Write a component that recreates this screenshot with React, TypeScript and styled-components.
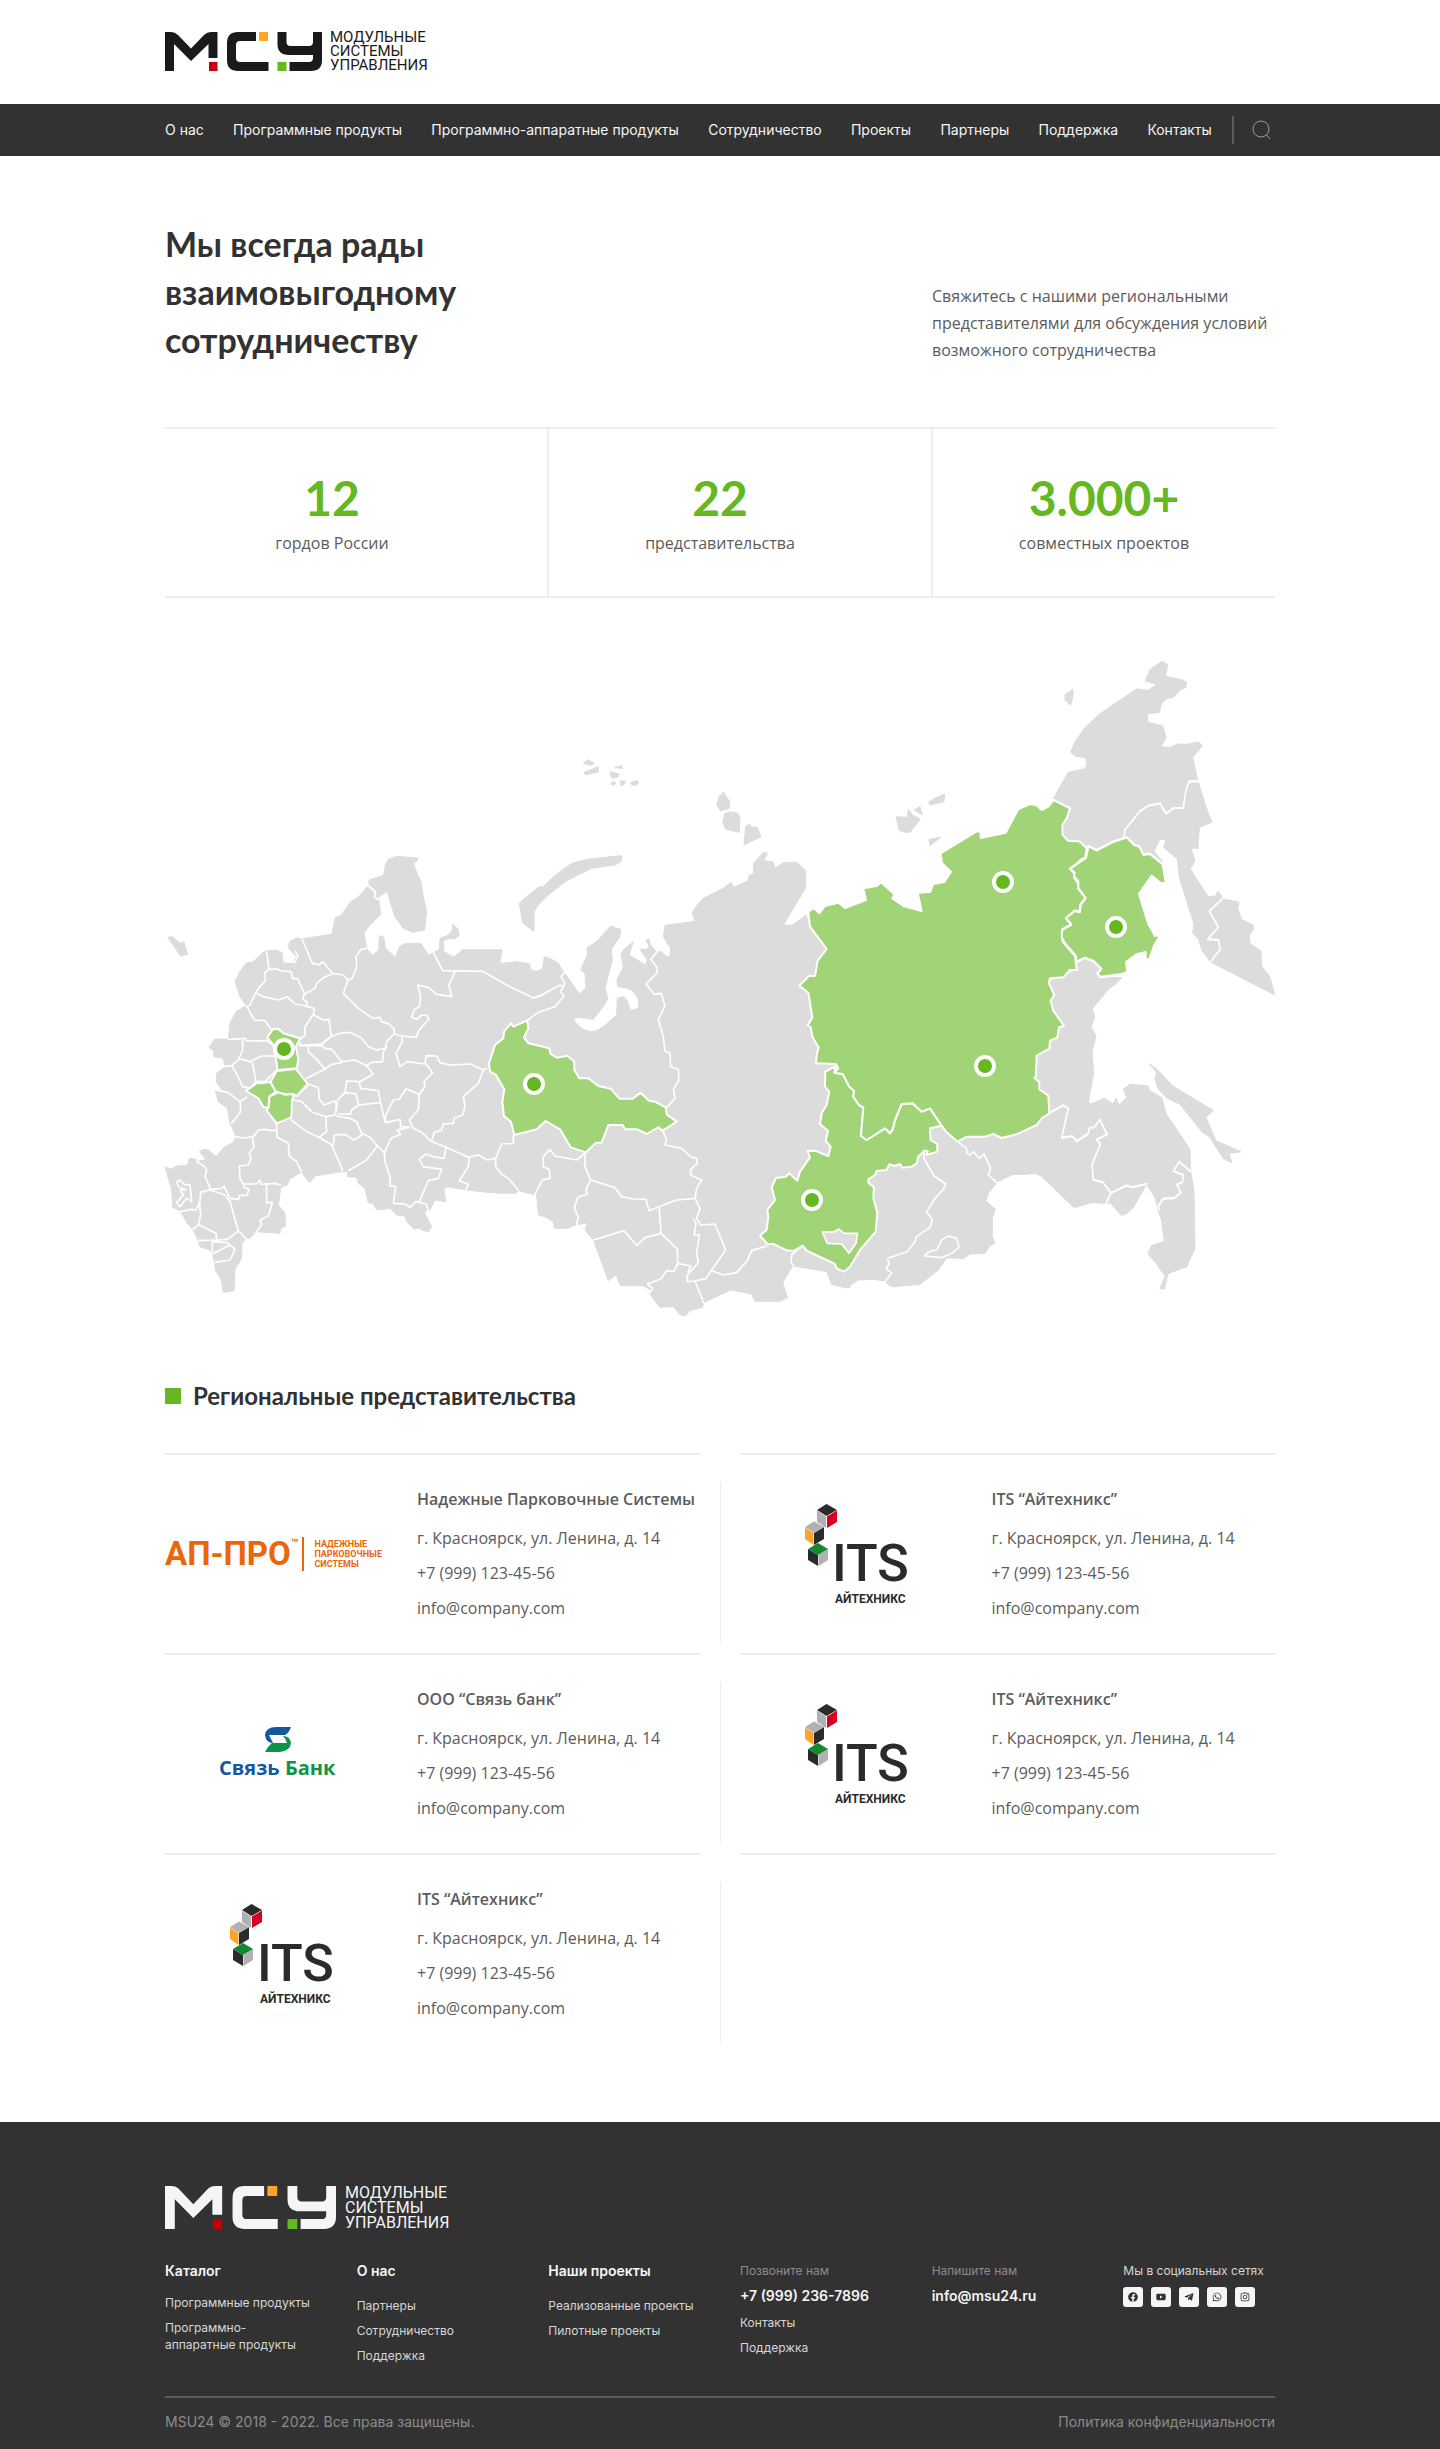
import React from 'react';
import styled, { createGlobalStyle } from 'styled-components';
import { FaFacebook, FaYoutube, FaTelegramPlane, FaWhatsapp, FaInstagram } from 'react-icons/fa';

const color = {
  dark: '#323232',
  text: '#5c5c5c',
  green: '#65b81f',
  region: '#a0d476',
  land: '#dcdcdc',
  line: '#eeeeee',
};

const GlobalStyle = createGlobalStyle`
  *, *::before, *::after { box-sizing: border-box; }
  body {
    margin: 0;
    background: #fff;
    color: ${color.text};
    font-family: 'Open Sans', 'Noto Sans', sans-serif;
    font-size: 16px;
    line-height: 27px;
  }
  h1, h2, h3, p, ul, dl, dd { margin: 0; padding: 0; }
  ul { list-style: none; }
  a { color: inherit; text-decoration: none; }
`;

const Container = styled.div`
  max-width: 1150px;
  margin: 0 auto;
  padding: 0 20px;
`;

/* ---------- Logo ---------- */

const LogoLink = styled.a<{ $large?: boolean }>`
  display: flex;
  align-items: center;
  gap: ${(p) => (p.$large ? 9 : 8)}px;
  width: fit-content;
  color: ${(p) => (p.$large ? '#f5f5f5' : '#1a1a1a')};
`;

const LogoMark = styled.svg<{ $large?: boolean }>`
  display: block;
  width: ${(p) => (p.$large ? 171 : 157)}px;
  height: ${(p) => (p.$large ? 43 : 39)}px;
`;

const LogoText = styled.span<{ $large?: boolean }>`
  display: flex;
  flex-direction: column;
  font-family: Roboto, sans-serif;
  font-size: ${(p) => (p.$large ? 16 : 15)}px;
  line-height: ${(p) => (p.$large ? 15 : 14)}px;
`;

function Logo({ large }: { large?: boolean }) {
  return (
    <LogoLink href="#" $large={large} aria-label="МСУ">
      <LogoMark $large={large} viewBox="0 0 157 39" preserveAspectRatio="none" aria-hidden="true">
        <g fill="currentColor">
          <path d="M0 39V0H6Q10 0 13 3L26 16.5L39 3Q42 0 46 0H52.5V26H43.5V12L26 29L9 12V39Z" />
          <path d="M91 0H73Q62 0 62 11V28Q62 39 73 39H103.5V30H75Q71 30 71 26V13Q71 9 75 9H91Z" />
          <path d="M112.5 0H121.5V10Q121.5 14 125.5 14H144Q148 14 148 10V0H157V28Q157 39 146 39H124.5V30H144Q148 30 148 26V23H124Q112.5 23 112.5 12Z" />
        </g>
        <rect x="44" y="30" width="8.5" height="9" fill="#c4000a" />
        <rect x="94" y="0" width="9" height="9" fill="#ffa724" />
        <rect x="112.5" y="30" width="9" height="9" fill={color.green} />
      </LogoMark>
      <LogoText $large={large}>
        <span>МОДУЛЬНЫЕ</span>
        <span>СИСТЕМЫ</span>
        <span>УПРАВЛЕНИЯ</span>
      </LogoText>
    </LogoLink>
  );
}

/* ---------- Header ---------- */

const TopBar = styled(Container)`
  padding-top: 30px;
  padding-bottom: 32px;
`;

const NavBar = styled.nav`
  background: ${color.dark};
`;

const NavInner = styled(Container)`
  display: flex;
  align-items: center;
  height: 52px;
`;

const NavList = styled.ul`
  display: flex;
  flex: 1;
  justify-content: space-between;
  margin-right: 20px;
  font-family: Inter, sans-serif;
  font-size: 14px;
  line-height: 20px;
  white-space: nowrap;
  color: #f5f5f5;
`;

const SearchButton = styled.button`
  display: flex;
  align-items: center;
  height: 28px;
  padding: 0 3px 0 18px;
  border: 0;
  border-left: 2px solid #5c5c5c;
  background: none;
  color: #9a9a9a;
  cursor: pointer;
`;

const navItems = [
  'О нас',
  'Программные продукты',
  'Программно-аппаратные продукты',
  'Сотрудничество',
  'Проекты',
  'Партнеры',
  'Поддержка',
  'Контакты',
];

function Header() {
  return (
    <header>
      <TopBar>
        <Logo />
      </TopBar>
      <NavBar>
        <NavInner>
          <NavList>
            {navItems.map((item) => (
              <li key={item}>
                <a href="#">{item}</a>
              </li>
            ))}
          </NavList>
          <SearchButton type="button" aria-label="Поиск">
            <svg width="20" height="20" viewBox="0 0 20 20" fill="none" stroke="currentColor">
              <circle cx="9" cy="9" r="8" />
              <path d="M14.5 15L18 19" />
            </svg>
          </SearchButton>
        </NavInner>
      </NavBar>
    </header>
  );
}

/* ---------- Intro and figures ---------- */

const Intro = styled.section`
  display: grid;
  grid-template-columns: 767fr 343fr;
  align-items: end;
  padding: 64px 0 63px;
`;

const Title = styled.h1`
  max-width: 400px;
  font-family: Lato, sans-serif;
  font-size: 34px;
  font-weight: 700;
  line-height: 48px;
  color: ${color.dark};
`;

const Figures = styled.dl`
  display: grid;
  grid-template-columns: 382fr 384fr 344fr;
  border: solid ${color.line};
  border-width: 2px 0;
`;

const Figure = styled.div`
  display: flex;
  flex-direction: column-reverse;
  align-items: center;
  gap: 4px;
  padding: 41px 0 39px;

  &:first-child { padding-right: 48px; }
  &:nth-child(2) { padding-right: 40px; }
  & + & { border-left: 2px solid ${color.line}; }
`;

const FigureValue = styled.dd`
  font-family: Lato, sans-serif;
  font-size: 48px;
  font-weight: 700;
  line-height: 56px;
  color: ${color.green};
`;

const figures = [
  { value: '12', label: 'гордов России' },
  { value: '22', label: 'представительства' },
  { value: '3.000+', label: 'совместных проектов' },
];

/* ---------- Map ---------- */

const MapSvg = styled.svg`
  display: block;
  width: 100%;
  height: auto;
  margin-top: 57px;

  .land { fill: ${color.land}; stroke: ${color.land}; stroke-width: 3; stroke-linejoin: round; }
  .border { fill: none; stroke: #fff; stroke-width: 5; stroke-linejoin: round; stroke-linecap: round; }
  .active { fill: ${color.region}; stroke: #fff; stroke-width: 6; stroke-linejoin: round; }
  .lake { fill: ${color.land}; stroke: #fff; stroke-width: 5; stroke-linejoin: round; }
`;

/* The sheets of the map, each with its own origin, drawn at three units to a pixel. */
const sheets = {
  west: 'translate(150 900) scale(0.33333)',
  north: 'translate(320 750) scale(0.33333)',
  centre: 'translate(450 820) scale(0.33333)',
  yakutia: 'translate(740 780) scale(0.33333)',
  east: 'translate(980 640) scale(0.33333 0.43367)',
};
type Sheet = keyof typeof sheets;
type Shapes = Partial<Record<Sheet, string[]>>;

const land: Shapes = {
  west: [
    '510 108 546 102 556 53 575 45 600 7 627 -10 652 -40 670 -26 674 -8 687 2 692 44 660 75 642 98 650 145 655 152 668 166 686 150 688 110 695 106 702 115 706 145 736 172 750 138 770 130 812 130 822 145 835 165 852 157 868 148 870 115 895 105 907 90 908 72 925 88 928 105 918 115 885 118 880 128 882 155 912 172 938 150 1056 150 1000 500 1200 800 1200 955 1168 945 1160 885 1150 883 1105 870 1098 878 1050 880 950 870 888 860 882 870 888 905 855 900 840 930 822 935 845 980 835 995 822 992 805 984 792 988 770 965 765 948 740 945 720 925 680 930 670 912 655 908 645 865 625 850 620 832 592 830 592 815 570 816 495 828 480 848 470 838 455 815 418 838 412 855 392 862 385 915 404 938 407 978 392 985 390 1000 320 995 300 1015 288 1018 276 1030 275 1075 255 1108 252 1172 220 1178 214 1140 196 1110 194 1090 190 1072 184 1052 150 1040 144 1020 128 988 112 970 90 932 68 922 65 870 45 800 62 808 80 798 113 795 118 775 138 778 142 785 168 778 148 755 160 748 175 750 198 770 222 742 248 728 258 710 250 690 240 670 232 625 205 605 196 575 215 570 198 545 200 520 225 500 220 475 192 470 190 450 177 443 195 417 235 418 240 370 258 335 280 322 290 318 270 290 255 245 270 215 288 190 310 185 340 157 352 152 380 150 400 160 403 185 430 185 440 170 425 155 416 145 418 125 440 114 456 117',
    '53 112 68 110 90 130 102 125 113 163 92 168',
  ],
  north: [
    '147 390 185 378 192 372 196 345 205 328 230 319 292 324 292 332 281 338 285 355 303 395 310 440 320 485 314 540 280 547 250 535 225 500 210 455 202 424 170 445 163 435 168 424 147 405',
    '598 460 610 448 658 410 670 410 700 380 755 340 800 328 890 318 906 318 903 335 885 345 815 355 740 392 685 435 655 465 642 485 642 545 608 518',
    '790 40 803 29 823 40 812 46',
    '792 67 835 50 835 66 797 74',
    '884 53 905 47 908 55',
    '870 65 897 72 893 82 875 84',
    '876 96 884 95 887 101 880 106 874 104',
    '902 92 915 93 916 99 908 107 900 104',
    '932 97 950 91 957 98 946 107 934 104',
    '1210 126 1229 155 1228 175 1202 183 1190 165 1196 143',
    '1215 190 1232 186 1250 188 1260 200 1258 247 1217 238 1208 215',
    '1277 230 1287 222 1297 232 1312 232 1323 260 1272 285',
  ],
  centre: [
    '38 390 155 390 134 410 155 430 175 428 200 425 240 432 240 448 260 454 278 445 283 410 300 415 325 430 340 455 352 470 388 522 408 505 405 460 392 450 412 405 411 385 445 360 482 318 512 328 510 350 484 388 487 420 465 505 474 535 460 560 430 598 385 592 370 595 380 612 400 628 420 635 440 632 460 620 500 585 502 535 520 530 532 542 542 572 566 565 564 535 545 510 525 503 503 500 501 480 520 442 513 400 525 385 550 365 537 405 585 434 592 420 570 388 590 388 598 380 588 360 598 358 600 372 620 397 635 395 650 410 661 408 662 385 640 350 645 316 735 304 727 278 745 250 760 235 820 205 842 187 852 202 895 182 896 168 912 160 910 132 940 97 953 100 940 122 970 126 975 145 1002 127 1040 127 1067 152 1067 203 1000 316 1028 315 1068 285 1080 320 1130 387 1200 500 1200 1403 1185 1403 1145 1392 1130 1355 1028 1338 998 1388 1013 1433 990 1444 915 1444 905 1422 842 1410 760 1448 758 1462 720 1472 705 1488 690 1484 670 1460 630 1462 598 1420 605 1412 580 1397 512 1397 498 1365 475 1382 430 1260 405 1230 412 1208 378 1215 350 1225 313 1225 310 1205 280 1188 265 1185 260 1123 250 1123 205 1112 195 1120 120 1117 50 1110 0 1100 0 408 12 412',
  ],
  yakutia: [
    '262 1475 275 1513 320 1523 355 1500 400 1498 435 1503 445 1515 460 1520 540 1513 595 1470 620 1433 670 1436 690 1422 735 1420 750 1397 765 1390 757 1370 757 1315 766 1288 738 1262 745 1240 770 1208 810 1185 700 1040 600 1000 500 1100 380 1200 350 1400 250 1440',
    '468 110 502 112 505 88 518 105 541 118 510 157 493 157 477 150',
    '522 90 540 80 547 105',
    '565 68 580 57 614 42 612 65 572 75',
    '567 178 602 172 570 197',
  ],
  east: [
    '290 742 315 733 340 740 365 760 358 777 425 779 400 797 385 805 337 850 344 870 333 893 348 913 336 950 341 998 325 1066 335 1070 372 1057 400 1070 408 1057 418 1073 441 1055 430 1036 450 1025 503 1028 510 1040 545 1055 560 1095 600 1140 630 1175 632 1225 642 1270 645 1402 620 1445 565 1460 553 1497 540 1495 555 1467 530 1438 504 1415 514 1397 553 1387 545 1340 536 1318 525 1285 500 1254 460 1308 440 1322 425 1327 392 1298 378 1299 335 1297 283 1309 183 1235 165 1230 130 1232 98 1232 48 1250 -20 1200 -80 1150 0 1100 140 900 205 790 288 762',
    '220 366 265 305 312 298 320 290 318 272 285 267 272 258 285 235 312 205 360 170 470 113 505 117 530 102 496 94 510 68 547 49 563 58 557 84 605 92 620 98 618 108 600 115 578 133 562 134 545 145 538 167 502 170 504 190 548 198 558 225 542 246 567 248 595 240 620 241 655 236 667 244 638 270 653 323 680 390 695 420 658 432 654 480 633 480 645 510 630 528 685 593 708 590 712 580 724 588 727 597 777 605 773 618 785 645 820 658 820 668 808 680 810 700 843 718 845 752 870 778 884 818 692 742 665 715 656 690 638 675 642 655 598 548 592 505 551 478 559 459 540 459 522 487 548 512 510 495 490 495 440 455 350 485 320 475 300 463 262 460 248 445 248 428 270 388',
    '255 127 279 114 279 130 272 150 255 137',
    '508 978 530 990 580 1030 700 1085 677 1100 708 1155 782 1180 747 1183 755 1205 730 1195 688 1145 665 1133 600 1070 560 1055 535 1035 525 1012 530 997',
  ],
};

const borders: Shapes = {
  west: [
    '456 117 487 190 508 194 519 185 547 220 580 225 594 240 607 235 620 200 618 170 633 148 650 145',
    '400 158 403 185 435 187 444 168 436 155',
    '547 222 525 230 500 250 495 265 463 283 458 297 470 305 472 318',
    '594 240 580 280 625 325 668 355 690 352 695 365 718 372 733 388 732 402 710 425 706 445 680 450 655 440 635 415 600 397 570 400 540 412 515 432',
    '850 157 878 212 998 214 1070 255 1150 294 1180 285',
    '915 214 897 255 905 290 860 283 835 262 803 255 812 290 808 320 793 328 785 352 800 358 815 345 830 346 837 357 805 393 800 412 755 408 735 402',
    '350 157 357 208 380 207 395 213 423 215 428 236 443 236 465 285',
    '357 208 345 217 346 242 320 272 300 315 290 320',
    '320 280 340 290 385 300 412 290 435 312 455 315 492 325 492 340 465 380 465 405 450 418',
    '292 322 313 360 345 362 362 387',
    '492 345 520 360 537 358 542 395 545 408 515 432 455 437 448 425',
    '235 418 285 415 290 423 350 422 370 435',
    '278 422 278 450 267 475 300 485 335 468 372 468',
    '267 478 245 497 220 500',
    '245 497 262 525 278 560 300 565 318 545 308 490',
    '318 545 345 545 378 513',
    '200 570 235 578 270 605 272 635 245 670',
    '270 605 290 592',
    '380 670 380 690 365 692 345 688 325 690 310 710 285 714 258 710',
    '308 715 312 742 297 760 303 775 295 795 268 798 270 835 280 852 320 852 330 840 333 853 375 850 392 855',
    '380 690 382 712 415 730 418 768 440 785 455 815',
    '424 660 470 695 507 712 545 735 578 812',
    '430 600 455 605 487 637 527 650 530 695 507 712',
    '440 588 478 553 505 563 508 598 522 615 555 603 560 620 555 645 527 650',
    '448 437 475 437 475 455 500 478 525 507 470 535',
    '475 437 515 437 525 445 545 448 575 485 615 480 650 497 670 522 630 545 590 543 585 578 563 600 558 635',
    '525 507 545 493 575 488',
    '650 497 665 487 698 485 700 455 710 440',
    '755 408 757 425 738 460 750 500 772 485 825 492 828 467 860 468 870 488 900 495 960 492 1000 510',
    '828 492 848 518 822 545 825 560 808 583 768 567 748 597 730 600 705 650 708 668 750 658 752 680 778 682',
    '808 583 805 630 778 660 790 685 815 697 840 722 888 742 955 772 985 765 1012 780 1037 775',
    '628 545 632 565 685 572 692 610 705 665',
    '585 578 618 582 626 615 605 630 602 642 565 642',
    '626 615 690 608',
    '560 648 600 655 620 665 635 700 660 712 680 735 703 758',
    '550 735 553 705 585 703 612 720 635 705',
    '680 740 650 780 595 812',
    '778 682 742 690 752 703 723 715 703 758 705 785 720 830 720 858 737 860 730 910 765 912 780 922 798 905 828 912 835 932',
    '1010 505 1000 510 985 550 940 590 945 620 938 645 912 655 910 670 880 672 875 690 853 697 845 722',
    '888 742 882 775 850 770 828 762 808 778 820 800 875 808 865 835 835 842 808 905',
    '957 772 955 800 928 842 955 853 948 870',
    '1090 705 1090 730 1055 732 1037 775 1037 800 1055 822 1075 835 1105 870',
    '140 785 165 800 170 810 165 830 180 862 178 870 152 877 150 905 138 930 125 928 92 935',
    '178 868 215 865 222 858 240 895 265 898 268 887 292 885 297 868 282 862 282 852',
    '180 870 225 885 240 905 265 993 232 1018 200 1020 145 1022',
    '148 905 152 945 145 975 130 987',
    '148 975 198 1000 200 1020',
    '265 993 290 1018',
    '350 855 350 908 367 908 355 948 330 960 335 975 318 997',
    '187 1055 187 1025 232 1028 255 1048 240 1080 195 1087',
    '187 1062 240 1035',
    '80 845 90 840 103 853 120 855 125 905 110 895 90 920 80 908 100 885 90 870 108 870 85 860 80 845',
  ],
  north: ['145 407 166 424 164 440 172 448'],
  centre: [
    '342 460 333 470 345 490 332 515 342 528 315 560 265 577 232 601',
    '250 534 275 525 330 495 340 500',
    '620 397 603 418 622 445 620 460 588 492 612 523 633 520 645 557 625 600 640 650 645 693 660 700 662 740 685 748 687 780 670 808 675 835 648 865',
    '638 932 650 960 645 975 695 985 725 1012 740 1015 742 1030 722 1048 722 1065 755 1080 740 1105 735 1135 680 1140 597 1172 588 1138 550 1137 515 1130 495 1103 422 1080 405 1040 405 1005',
    '408 997 380 1020 315 1008 300 988 280 1010 280 1040 298 1048 300 1075 277 1080 255 1123',
    '422 1080 408 1108 412 1122 383 1132 373 1165 385 1190 380 1215',
    '430 1260 522 1232 560 1276 585 1253 633 1240 628 1165',
    '633 1240 682 1287 683 1330 672 1355 650 1352 632 1377 592 1392 608 1405 600 1418',
    '735 1135 750 1165 740 1195 752 1215 795 1212 827 1290 785 1350 768 1375 735 1383 712 1385 712 1365 745 1328 740 1300 748 1245 732 1245 738 1210 732 1198',
    '683 1330 722 1338 715 1355',
    '735 1383 758 1440 760 1448',
    '950 1278 905 1292 890 1325 860 1358 820 1365 785 1352',
  ],
  yakutia: [
    '553 1112 552 1135 582 1188 617 1212 610 1228 585 1255 560 1295 577 1320 570 1342 530 1370 525 1385 500 1416 443 1435 447 1452 438 1467 455 1478 437 1503',
    '555 1425 575 1412 590 1410 605 1380 625 1368 650 1375 657 1402 635 1420 605 1433 555 1428',
    '653 1085 680 1105 680 1118 690 1125 700 1115 718 1135 732 1122 752 1165 745 1185 770 1208',
    '188 1397 155 1425 153 1445 160 1458',
  ],
  east: [
    '432 453 434 438 480 395 505 382 540 377 558 400 580 388 610 387 617 350 627 326 655 326',
    '727 597 688 625 715 662 683 690 715 692 721 713 692 742',
    '205 1092 250 1073 265 1080 245 1148 277 1144 291 1156 325 1138 328 1125 342 1124 360 1106 381 1140 350 1152 361 1163 336 1210 340 1245 368 1250 393 1275 378 1299',
    '393 1275 440 1258 457 1262 500 1254',
    '538 1313 535 1305 550 1288 583 1287 603 1274 590 1256 608 1250 609 1233 580 1225 598 1203 632 1226',
  ],
};

const activeRegions: Shapes = {
  west: [
    '352 412 368 388 385 386 400 400 450 415 438 440 445 478 440 505 382 510 380 490 375 465 370 435',
    '362 545 380 513 438 507 473 552 440 588 428 582 405 583 375 575',
    '288 573 322 548 330 550 360 546 378 575 358 590 355 625 340 620 325 595',
    '358 590 385 577 405 584 428 582 430 595 426 600 424 652 380 670 350 632 357 620',
  ],
  centre: [
    '232 601 190 620 183 610 162 635 160 655 135 675 117 730 120 755 138 765 163 808 157 845 162 888 183 905 193 945 260 928 287 903 330 928 362 982 408 997 438 968 455 968 475 915 518 915 525 928 562 928 590 942 625 922 638 932 680 905 650 883 647 862 615 845 597 842 572 818 548 836 508 836 482 806 445 798 415 775 388 775 373 750 373 725 352 707 320 713 302 702 298 685 235 670 222 652 235 625',
  ],
  yakutia: [
    '288 858 283 878 308 882 328 920 342 932 340 950 357 975 370 982 363 1068 380 1080 435 1045 450 1060 458 1048 465 1020 485 972 518 970 545 995 570 985 605 1037 570 1045 572 1080 592 1092 592 1115 560 1125 563 1113 553 1112 535 1130 530 1150 515 1160 487 1163 480 1152 465 1158 448 1153 440 1170 410 1173 405 1185 385 1198 385 1208 402 1222 400 1255 412 1298 407 1355 360 1410 330 1460 312 1475 290 1465 285 1452 260 1440 200 1412 188 1397 160 1413 140 1411 100 1392 82 1392 60 1366 80 1350 85 1310 82 1290 105 1260 95 1222 108 1194 138 1190 148 1180 172 1202 180 1175 210 1132 203 1113 225 1112 265 1128 272 1100 257 1083 264 1052 240 1032 245 1000 260 975 268 935 255 920 256 875',
    '205 395 222 384 238 400 255 378 295 368 315 384 378 360 370 325 410 318 423 307 463 343 457 355 490 378 545 393 533 338 570 336 580 312 613 306 633 275 606 250 602 220 710 154 722 156 722 174 797 158 835 87 870 72 890 76 905 90 925 80 941 60 990 85 980 115 967 135 968 165 985 183 1018 184 1040 205 1035 235 1025 237 992 268 1003 280 1003 295 1015 310 1015 327 1037 353 1020 375 1020 393 1005 393 978 415 995 435 967 450 968 485 1005 528 1010 570 990 570 970 592 930 595 926 608 943 645 932 662 940 692 972 738 957 742 952 773 930 782 928 806 890 827 888 890 883 893 898 907 898 928 925 947 928 1000 905 1015 890 1035 830 1063 785 1074 760 1062 735 1070 680 1070 653 1085 618 1055 605 1037 570 985 545 995 518 970 485 972 465 1020 458 1048 450 1060 435 1045 380 1080 363 1068 370 982 357 975 340 950 342 932 328 920 308 882 283 878 295 865 288 852 228 850 230 825 236 803 218 772 212 742 203 735 217 713 205 638 178 617 207 588 225 588 233 542 260 507 210 440',
  ],
  east: [
    '325 475 350 485 400 465 440 455 462 472 478 476 490 495 510 493 548 517 558 562 540 560 515 544 477 586 505 655 525 682 542 679 522 705 508 737 497 737 497 720 470 725 438 743 442 765 425 771 362 777 352 770 364 758 340 740 315 733 290 742 287 728 255 700 245 685 246 668 274 656 258 641 285 624 300 627 302 610 317 595 295 572 295 557 282 545 284 537 270 527 318 502 323 485',
  ],
};

const pins = [
  [284, 1049],
  [534, 1084],
  [1003, 882],
  [985, 1066],
  [812, 1200],
  [1116, 927],
];

function Layer({ shapes, kind }: { shapes: Shapes; kind: 'land' | 'border' | 'active' }) {
  return (
    <>
      {(Object.keys(shapes) as Sheet[]).map((sheet) => (
        <g key={sheet} transform={sheets[sheet]}>
          {shapes[sheet]!.map((points) =>
            kind === 'border' ? (
              <polyline key={points} className={kind} points={points} />
            ) : (
              <polygon key={points} className={kind} points={points} />
            ),
          )}
        </g>
      ))}
    </>
  );
}

function RegionMap() {
  return (
    <MapSvg viewBox="165 655 1110 665" role="img" aria-label="Карта представительств">
      <Layer shapes={land} kind="land" />
      <Layer shapes={borders} kind="border" />
      <Layer shapes={activeRegions} kind="active" />
      <g transform={sheets.yakutia}>
        <polygon className="lake" points="247 1356 282 1356 296 1347 312 1360 352 1360 348 1390 327 1420 305 1392 262 1390" />
      </g>
      {pins.map(([x, y]) => (
        <circle key={`${x}-${y}`} cx={x} cy={y} r="9" fill={color.green} stroke="#fff" strokeWidth="4" />
      ))}
    </MapSvg>
  );
}

/* ---------- Partner logos ---------- */

const ApProLogo = styled.div`
  display: flex;
  align-items: center;
  width: 216px;
  font-family: Roboto, sans-serif;
  font-weight: 700;
  color: #ea6608;
  white-space: nowrap;
`;

const ApProName = styled.span`
  font-size: 33px;
  line-height: 34px;
`;

const ApProSign = styled.span`
  align-self: flex-start;
  font-size: 12px;
  line-height: 12px;
`;

const ApProTagline = styled.span`
  display: flex;
  flex-direction: column;
  margin-left: 4px;
  padding: 2px 0 2px 10px;
  border-left: 2px solid currentColor;
  font-size: 9px;
  line-height: 10px;
`;

const PartnerSvg = styled.svg`
  display: block;
  overflow: visible;
`;

function ApPro() {
  return (
    <ApProLogo>
      <ApProName>АП-ПРО</ApProName>
      <ApProSign>™</ApProSign>
      <ApProTagline>
        <span>НАДЕЖНЫЕ</span>
        <span>ПАРКОВОЧНЫЕ</span>
        <span>СИСТЕМЫ</span>
      </ApProTagline>
    </ApProLogo>
  );
}

function Its() {
  return (
    <PartnerSvg width="114" height="100" viewBox="-14 0 114 100" role="img" aria-label="ITS Айтехникс">
      <path fill="#2b2b2d" d="M21.5 0L32 6L21.5 12L12 6ZM19 23V35L9 41V29ZM3 45V56L13 62V51Z" />
      <path fill="#b1b1b5" d="M12 6.500L21 12.500V24L12 18ZM9 17.500L19 23L9 29L0 23ZM23 45V56L13.500 62V51Z" />
      <path fill="#d9001f" d="M32 6.500V18L22 24V12.500Z" />
      <path fill="#ffa42a" d="M0 23.500L8.500 29V41L0 35Z" />
      <path fill="#12892f" d="M13 39L23 45L13 51L3 45Z" />
      <g fill="#2b2b2d" fontFamily="Roboto, sans-serif">
        <text x="27" y="77" fontSize="52" fontWeight="500">
          ITS
        </text>
        <text x="30" y="99" fontSize="12" fontWeight="700">
          АЙТЕХНИКС
        </text>
      </g>
    </PartnerSvg>
  );
}

function SvyazBank() {
  return (
    <PartnerSvg width="130" height="54" viewBox="-11 0 130 54" role="img" aria-label="СвязьБанк">
      <path fill="#1458a0" d="M72 0H57Q47 0 46 8Q47 16 54 16Q52 12 50 8H66Q70 6 72 0Z" />
      <path fill="#0c9448" d="M46 25H61Q71 24 72 16Q71 9 64 9Q67 12 68 16H53Q49 19 46 25Z" />
      <g fontFamily="'Open Sans', sans-serif" fontWeight="700" fontSize="20">
        <text x="0" y="48" fill="#1458a0">Связь</text>
        <text x="66" y="48" fill="#0c9448">Банк</text>
      </g>
    </PartnerSvg>
  );
}

/* ---------- Offices ---------- */

const SectionTitle = styled.h2`
  display: flex;
  align-items: center;
  gap: 12px;
  margin: 60px 0 41px;
  font-family: Lato, sans-serif;
  font-size: 24px;
  font-weight: 700;
  line-height: 32px;
  color: ${color.dark};

  &::before {
    content: '';
    width: 16px;
    height: 16px;
    background: ${color.green};
  }
`;

const OfficeRow = styled.div`
  display: grid;
  grid-template-columns: 1fr 1px 1fr;
  column-gap: 19px;
  min-height: 200px;
`;

const RowDivider = styled.span`
  margin: 29px 0 11px;
  background: ${color.line};
`;

const OfficeCard = styled.article`
  display: grid;
  grid-template-columns: 216px 1fr;
  column-gap: 36px;
  border-top: 2px solid ${color.line};
`;

const EmptyCell = styled.div`
  border-top: 2px solid ${color.line};
`;

const OfficeLogo = styled.div`
  display: flex;
  align-items: center;
  justify-content: center;
`;

const OfficeInfo = styled.div`
  padding: 31px 0;
  white-space: nowrap;
`;

const OfficeName = styled.h3`
  margin-bottom: 12px;
  font-size: 16px;
  font-weight: 600;
`;

const OfficeContacts = styled.ul`
  display: grid;
  row-gap: 8px;
`;

const Offices = styled.section`
  padding-bottom: 69px;
`;

type Office = { name: string; logo: React.ReactNode };

const officeRows: Office[][] = [
  [
    { name: 'Надежные Парковочные Системы', logo: <ApPro /> },
    { name: 'ITS “Айтехникс”', logo: <Its /> },
  ],
  [
    { name: 'ООО “Связь банк”', logo: <SvyazBank /> },
    { name: 'ITS “Айтехникс”', logo: <Its /> },
  ],
  [{ name: 'ITS “Айтехникс”', logo: <Its /> }],
];

function OfficeItem({ name, logo }: Office) {
  return (
    <OfficeCard>
      <OfficeLogo>{logo}</OfficeLogo>
      <OfficeInfo>
        <OfficeName>{name}</OfficeName>
        <OfficeContacts>
          <li>г. Красноярск, ул. Ленина, д. 14</li>
          <li>
            <a href="tel:+79991234556">+7 (999) 123-45-56</a>
          </li>
          <li>
            <a href="mailto:info@company.com">info@company.com</a>
          </li>
        </OfficeContacts>
      </OfficeInfo>
    </OfficeCard>
  );
}

/* ---------- Footer ---------- */

const FooterRoot = styled.footer`
  padding: 63px 0 17px;
  background: ${color.dark};
  font-family: Inter, sans-serif;
  color: #d6d6d6;
`;

const FooterColumns = styled.div`
  display: grid;
  grid-template-columns: repeat(6, 1fr);
  column-gap: 40px;
  margin-top: 32px;
  padding-bottom: 32px;
  font-size: 12px;
  line-height: 17px;
`;

const FooterTitle = styled.h2`
  font-size: 14px;
  font-weight: 600;
  line-height: 18px;
  color: #f5f5f5;
`;

const FooterLinks = styled.ul<{ $top: number }>`
  display: grid;
  row-gap: 8px;
  margin-top: ${(p) => p.$top}px;
`;

const FooterItem = styled.li<{ $wrap?: boolean }>`
  white-space: ${(p) => (p.$wrap ? 'normal' : 'nowrap')};
`;

const FooterLabel = styled.p<{ $bright?: boolean }>`
  white-space: nowrap;
  color: ${(p) => (p.$bright ? '#d6d6d6' : '#8c8c8c')};
`;

const FooterContact = styled.a`
  display: block;
  margin-top: 7px;
  font-size: 14px;
  font-weight: 600;
  line-height: 20px;
  color: #f5f5f5;
`;

const SocialList = styled.ul`
  display: flex;
  gap: 8px;
  margin-top: 8px;
`;

const SocialLink = styled.a`
  display: flex;
  align-items: center;
  justify-content: center;
  width: 20px;
  height: 20px;
  border-radius: 3px;
  background: #f5f5f5;
  color: ${color.dark};
  font-size: 10px;
`;

const FooterBottom = styled.div`
  display: flex;
  justify-content: space-between;
  padding-top: 14px;
  border-top: 2px solid #5c5c5c;
  font-size: 14px;
  line-height: 20px;
  color: #8c8c8c;
`;

const socials = [
  { name: 'Facebook', Icon: FaFacebook },
  { name: 'YouTube', Icon: FaYoutube },
  { name: 'Telegram', Icon: FaTelegramPlane },
  { name: 'WhatsApp', Icon: FaWhatsapp },
  { name: 'Instagram', Icon: FaInstagram },
];

function Links({ items, top }: { items: string[]; top: number }) {
  return (
    <FooterLinks $top={top}>
      {items.map((item) => (
        <FooterItem key={item} $wrap={item.length > 25}>
          <a href="#">{item}</a>
        </FooterItem>
      ))}
    </FooterLinks>
  );
}

function Footer() {
  return (
    <FooterRoot>
      <Container>
        <Logo large />
        <FooterColumns>
          <div>
            <FooterTitle>Каталог</FooterTitle>
            <Links top={14} items={['Программные продукты', 'Программно-аппаратные продукты']} />
          </div>
          <div>
            <FooterTitle>О нас</FooterTitle>
            <Links top={17} items={['Партнеры', 'Сотрудничество', 'Поддержка']} />
          </div>
          <div>
            <FooterTitle>Наши проекты</FooterTitle>
            <Links top={17} items={['Реализованные проекты', 'Пилотные проекты']} />
          </div>
          <div>
            <FooterLabel>Позвоните нам</FooterLabel>
            <FooterContact href="tel:+79992367896">+7 (999) 236-7896</FooterContact>
            <Links top={8} items={['Контакты', 'Поддержка']} />
          </div>
          <div>
            <FooterLabel>Напишите нам</FooterLabel>
            <FooterContact href="mailto:info@msu24.ru">info@msu24.ru</FooterContact>
          </div>
          <div>
            <FooterLabel $bright>Мы в социальных сетях</FooterLabel>
            <SocialList>
              {socials.map(({ name, Icon }) => (
                <li key={name}>
                  <SocialLink href="#" aria-label={name}>
                    <Icon />
                  </SocialLink>
                </li>
              ))}
            </SocialList>
          </div>
        </FooterColumns>
        <FooterBottom>
          <span>MSU24 © 2018 - 2022. Все права защищены.</span>
          <a href="#">Политика конфиденциальности</a>
        </FooterBottom>
      </Container>
    </FooterRoot>
  );
}

export default function App() {
  return (
    <>
      <GlobalStyle />
      <Header />
      <Container as="main">
        <Intro>
          <Title>Мы всегда рады взаимовыгодному сотрудничеству</Title>
          <p>Свяжитесь с нашими региональными представителями для обсуждения условий возможного сотрудничества</p>
        </Intro>
        <Figures>
          {figures.map(({ value, label }) => (
            <Figure key={value}>
              <dt>{label}</dt>
              <FigureValue>{value}</FigureValue>
            </Figure>
          ))}
        </Figures>
        <RegionMap />
        <Offices>
          <SectionTitle>Региональные представительства</SectionTitle>
          {officeRows.map((row, index) => (
            <OfficeRow key={index}>
              <OfficeItem {...row[0]} />
              <RowDivider />
              {row[1] ? <OfficeItem {...row[1]} /> : <EmptyCell />}
            </OfficeRow>
          ))}
        </Offices>
      </Container>
      <Footer />
    </>
  );
}
